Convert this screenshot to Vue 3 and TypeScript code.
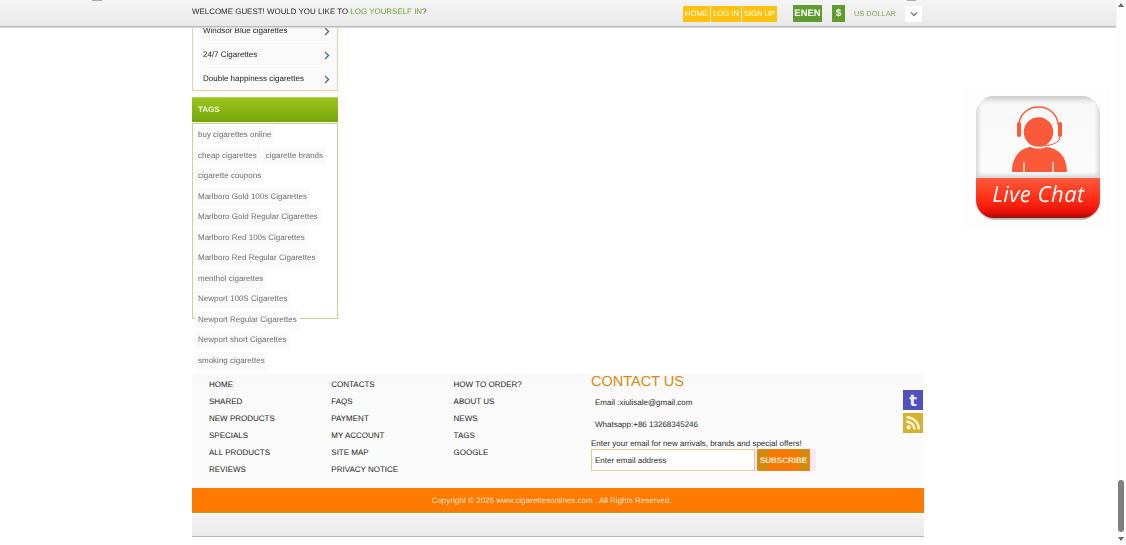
<script setup lang="ts">
const cats: string[] = ['Windsor Blue cigarettes', '24/7 Cigarettes', 'Double happiness cigarettes']
const tags: string[] = [
  'buy cigarettes online', 'cheap cigarettes', 'cigarette brands', 'cigarette coupons',
  'Marlboro Gold 100s Cigarettes', 'Marlboro Gold Regular Cigarettes', 'Marlboro Red 100s Cigarettes',
  'Marlboro Red Regular Cigarettes', 'menthol cigarettes', 'Newport 100S Cigarettes',
  'Newport Regular Cigarettes', 'Newport short Cigarettes', 'smoking cigarettes'
]
const cols: string[][] = [
  ['HOME', 'SHARED', 'NEW PRODUCTS', 'SPECIALS', 'ALL PRODUCTS', 'REVIEWS'],
  ['CONTACTS', 'FAQS', 'PAYMENT', 'MY ACCOUNT', 'SITE MAP', 'PRIVACY NOTICE'],
  ['HOW TO ORDER?', 'ABOUT US', 'NEWS', 'TAGS', 'GOOGLE']
]
</script>

<template>
  <div class="page">
    <header class="topbar">
      <div class="topinner">
        <p class="welcome">WELCOME GUEST! WOULD YOU LIKE TO <a>LOG YOURSELF IN</a>?</p>
        <nav class="btns"><a class="w27">HOME</a><a class="w30">LOG IN</a><a class="w35">SIGN UP</a></nav>
        <span class="lang">ENEN</span>
        <span class="dollar">$</span>
        <span class="cur">US DOLLAR</span>
        <span class="sel">
          <svg width="8" height="6" viewBox="0 0 8 6"><path d="M1 1.5 4 4.5 7 1.5" fill="none" stroke="#777" stroke-width="1.3" /></svg>
        </span>
      </div>
      <i class="sliver s1"></i>
      <i class="sliver s2"></i>
    </header>

    <main class="wrap">
      <aside class="side">
        <ul class="cats">
          <li v-for="c in cats" :key="c">
            <span>{{ c }}</span>
            <svg width="6" height="9" viewBox="0 0 6 9"><path d="M1 1 4.6 4.5 1 8" fill="none" stroke="#4a5f8f" stroke-width="1.2" /></svg>
          </li>
        </ul>
        <h3 class="taghead">TAGS</h3>
        <div class="tagbox">
          <span v-for="t in tags" :key="t" class="tag">{{ t }}</span>
        </div>
      </aside>

      <footer class="foot">
        <div class="links">
          <ul v-for="(col, i) in cols" :key="i" class="col">
            <li v-for="l in col" :key="l">{{ l }}</li>
          </ul>
        </div>
        <div class="contact">
          <h2>CONTACT US</h2>
          <p class="line first">Email :xiulisale@gmail.com</p>
          <p class="line second">Whatsapp:+86 13268345246</p>
          <p class="offer">Enter your email for new arrivals, brands and special offers!</p>
          <form class="sub" @submit.prevent>
            <div class="inp">Enter email address</div>
            <div class="go">SUBSCRIBE</div>
          </form>
        </div>
        <div class="social">
          <span class="tum">t</span>
          <span class="rss">
            <svg width="16" height="16" viewBox="0 0 16 16">
              <circle cx="3.6" cy="12.4" r="2.1" fill="#fff3d0" />
              <path d="M1.5 6.6a8 8 0 0 1 8 8M1.5 2.2a12.4 12.4 0 0 1 12.4 12.4" fill="none" stroke="#fff3d0" stroke-width="2.6" />
            </svg>
          </span>
        </div>
      </footer>
      <div class="copy">Copyright © 2026 www.cigarettesonlines.com . All Rights Reserved.</div>
      <div class="base"></div>
    </main>

    <aside class="chat">
      <svg width="146" height="140" viewBox="-12 -7 146 140">
        <defs>
          <linearGradient id="w" x1="0" x2="0" y1="0" y2="1">
            <stop offset="0" stop-color="#d8d8d8" /><stop offset=".08" stop-color="#f8f8f8" />
            <stop offset=".6" stop-color="#fbfbfb" /><stop offset="1" stop-color="#c8c8c8" />
          </linearGradient>
          <linearGradient id="r" x1="0" x2="0" y1="0" y2="1">
            <stop offset="0" stop-color="#fb5a3c" /><stop offset=".55" stop-color="#ff2a12" />
            <stop offset=".85" stop-color="#e60f08" /><stop offset="1" stop-color="#8c0d08" />
          </linearGradient>
          <clipPath id="c"><rect x="0" y="1" width="124" height="122" rx="18" /></clipPath>
          <filter id="b" x="-10%" y="-10%" width="120%" height="120%"><feGaussianBlur stdDeviation="2" /></filter>
        </defs>
        <rect x="1" y="4" width="122" height="121" rx="18" fill="#888" opacity=".55" />
        <g clip-path="url(#c)">
          <rect width="124" height="124" fill="url(#w)" />
          <rect x="0" y="1" width="124" height="82" fill="none" stroke="#bdbdbd" stroke-width="3" filter="url(#b)" />
          <rect y="83" width="124" height="41" fill="url(#r)" />
        </g>
        <circle cx="62.5" cy="37" r="14.7" fill="#fb5a3a" />
        <path d="M43 30a19.5 18 0 0 1 39 0" fill="none" stroke="#fb5a3a" stroke-width="1.4" />
        <rect x="41" y="27" width="4" height="15" rx="1.8" fill="#fb5a3a" />
        <rect x="82" y="27" width="4" height="15" rx="1.8" fill="#fb5a3a" />
        <path d="M84 42c0 6-10 9-19 9" fill="none" stroke="#fb5a3a" stroke-width="1" />
        <path d="M36 77c0-15 8-24 19-25 4 2 11 2 15 0 13 1 21 10 21 25Z" fill="#fb5a3a" />
        <path d="M48 67v10M77 67v10" stroke="#fff" stroke-width="1.2" />
        <text x="62.5" y="107" text-anchor="middle" class="chattext">Live Chat</text>
      </svg>
    </aside>

    <div class="scroll" aria-hidden="true">
      <i class="up"></i>
      <i class="thumb"></i>
      <i class="down"></i>
    </div>
  </div>
</template>

<style>
html, body { margin: 0; overflow: hidden; background: #fff; }
</style>

<style scoped>
* { box-sizing: border-box; }
.page {
  width: 1126px; height: 545px; position: relative; overflow: hidden;
  font-family: "Liberation Sans", Arial, sans-serif; color: #222; padding-right: 10px;
  text-rendering: geometricPrecision; filter: blur(.3px);
}
.topbar {
  position: absolute; left: 0; top: 0; width: 1116px; height: 27px; z-index: 5;
  background: linear-gradient(#f5f5f5, #e9e9e9); border-bottom: 1px solid #b8b8b8; box-shadow: 0 1px 1px #ddd;
}
.sliver { position: absolute; top: 0; height: 1px; background: #a8a8a8; }
.s1 { left: 92px; width: 10px; }
.s2 { left: 907px; width: 9px; }
.topinner { width: 732px; margin: 0 auto; display: flex; align-items: center; height: 26px; padding-top: 1px; }
.welcome { margin: 0 0 5px; font-size: 7.95px; color: #2a2a2a; flex: 0 0 491px; white-space: nowrap; }
.welcome a { color: #6f9f33; }
.btns { display: flex; gap: 1px; flex: 0 0 94px; }
.btns a { height: 16px; line-height: 16px; background: #ffc20e; color: #fff; font-size: 7.6px; text-align: center; }
.w27 { width: 27px; } .w30 { width: 30px; } .w35 { width: 35px; }
.lang { margin-left: 16px; width: 29px; height: 17px; line-height: 17px; background: #5f9c2f; color: #fff; font-weight: 700; font-size: 9.5px; text-align: center; }
.dollar { margin-left: 10px; width: 13px; height: 17px; line-height: 18px; background: #5f9c2f; color: #fff; font-weight: 700; font-size: 10px; text-align: center; }
.cur { margin-left: 9px; width: 51px; font-size: 7.4px; color: #86a85c; white-space: nowrap; }
.sel { width: 17px; height: 16px; background: #fff; display: flex; align-items: center; justify-content: center; }

.wrap { width: 732px; margin: 0 auto; }
.side { height: 374px; width: 146px; }
.cats { margin: 0; padding: 18px 0 0 2px; list-style: none; height: 91px; border: 1px solid #fbc9a4; border-top: 0; }
.cats li {
  height: 24px; margin: 0 0 0 3px; padding: 2px 7px 0 5px; background: #fafafa; border-bottom: 1px solid #fff;
  display: flex; align-items: center; justify-content: space-between; font-size: 8px; color: #1a1a1a;
}
.cats svg { margin-top: 2px; }
.taghead {
  margin: 6px 0 0; height: 25px; line-height: 24px; padding-left: 6px; font-size: 8px; font-weight: 700; color: #f1f7dc;
  background: linear-gradient(#9cc51a, #76a40c); border-top: 1px solid #b4d46a;
}
.tagbox {
  margin-top: 1px; height: 196px; width: 146px; border: 1px solid #bcd98c; padding: 2.3px 0 0 2px;
  display: flex; flex-wrap: wrap; align-content: flex-start; gap: 2.5px 3px;
}
.tag {
  height: 18px; line-height: 18px; padding: 0 3px; background: #fafafa; font-size: 8px; color: #6e6e6e; white-space: nowrap;
}
.foot { height: 114px; background: linear-gradient(#f9f9f9, #fcfcfc); display: flex; position: relative; }
.links { display: flex; padding: 2px 0 0 17px; width: 399px; flex: none; }
.col { margin: 0; padding: 0; list-style: none; width: 122.3px; flex: none; }
.col li { height: 17.1px; line-height: 17.1px; font-size: 8px; color: #222; white-space: nowrap; }
.contact { width: 312px; flex: none; }
.contact h2 { margin: 0; height: 15px; line-height: 17px; font-size: 14.5px; font-weight: 400; color: #d58a12; }
.line { margin: 0 0 0 4px; font-size: 8px; color: #2a2a2a; line-height: 12px; }
.first { margin-top: 8px; }
.second { margin-top: 10px; }
.offer { margin: 7px 0 0; font-size: 8px; line-height: 11px; color: #2a2a2a; white-space: nowrap; }
.sub { display: flex; margin: 0; background: #fde6f8; width: 225px; }
.inp { width: 164px; height: 22px; line-height: 21px; border: 1px solid #e2cf94; background: #fff; padding-left: 3px; font-size: 8px; color: #2a2a2a; }
.go {
  margin: 0 0 0 2px; width: 53px; height: 22px; line-height: 21px; text-align: center; font-size: 8px; font-weight: 700; color: #ffe9c8;
  background: linear-gradient(90deg, #d08a10 0 20%, #f47a05 20% 80%, #d08a10 80%); border: 1px solid #f4801a;
}
.social { display: flex; flex-direction: column; gap: 3px; padding-top: 16px; width: 20px; }
.tum, .rss { width: 20px; height: 20px; display: flex; align-items: center; justify-content: center; }
.tum { background: #5052b8; color: #eef; font-weight: 700; font-size: 16px; font-family: "DejaVu Sans", sans-serif; }
.rss { background: #d6b130; }
.copy {
  height: 25px; line-height: 25px; background: #ff7a00; border-bottom: 1px solid #8fb02a; color: #ffe6cc; text-align: center; font-size: 8px;
  padding-right: 13px;
}
.base { height: 24px; background: linear-gradient(#fdeef6 0 4px, #f1f1f1 4px, #ebebeb); border-bottom: 1px solid #b5b5b5; }
.chat { position: absolute; left: 964px; top: 88px; width: 146px; height: 140px; background: #fdfdfd; }
.chattext { font-family: "Open Sans", "DejaVu Sans", sans-serif; font-style: italic; font-size: 22px; fill: #fff; letter-spacing: .5px; }
.scroll { position: absolute; right: 0; top: 0; width: 10px; height: 545px; background: #fdfdfd; }
.up, .down { position: absolute; left: 2px; width: 0; height: 0; border-left: 3px solid transparent; border-right: 3px solid transparent; }
.up { top: 3px; border-bottom: 4px solid #666; }
.down { top: 537px; border-top: 4px solid #666; }
.thumb { position: absolute; left: 2px; top: 480px; width: 6px; height: 52px; background: #808080; border-radius: 3px; }
</style>
